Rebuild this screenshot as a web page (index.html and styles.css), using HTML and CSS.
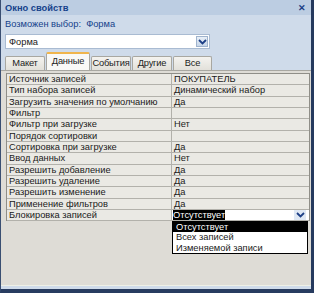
FILE: index.html
```html
<!DOCTYPE html>
<html>
  <head>
    <meta charset="utf-8" />
    <title>Окно свойств</title>
    <link rel="stylesheet" href="styles.css">
  </head>
  <body>
    <div class="window">
      <div class="titlebar">
        <span class="title">Окно свойств</span>
        <span class="close">&#x2715;</span>
      </div>
      <div class="hint">Возможен выбор:&nbsp; Форма</div>
      <div class="combo">
        <span class="combo-text">Форма</span>
        <span class="arrow-btn">
          <svg width="9" height="6" viewBox="0 0 9 6"><path d="M1 1 L4.5 4.5 L8 1" fill="none" stroke="#1d3f86" stroke-width="1.8"/></svg>
        </span>
      </div>
      <div class="tabs">
        <div class="tab">Макет</div>
        <div class="tab active">Данные</div>
        <div class="tab">События</div>
        <div class="tab">Другие</div>
        <div class="tab wide">Все</div>
      </div>
      <div class="panel">
        <div class="grid">
          <div class="row"><div class="name">Источник записей</div><div class="value">ПОКУПАТЕЛЬ</div></div>
          <div class="row"><div class="name">Тип набора записей</div><div class="value">Динамический набор</div></div>
          <div class="row"><div class="name">Загрузить значения по умолчанию</div><div class="value">Да</div></div>
          <div class="row"><div class="name">Фильтр</div><div class="value"></div></div>
          <div class="row"><div class="name">Фильтр при загрузке</div><div class="value">Нет</div></div>
          <div class="row"><div class="name">Порядок сортировки</div><div class="value"></div></div>
          <div class="row"><div class="name">Сортировка при загрузке</div><div class="value">Да</div></div>
          <div class="row"><div class="name">Ввод данных</div><div class="value">Нет</div></div>
          <div class="row"><div class="name">Разрешить добавление</div><div class="value">Да</div></div>
          <div class="row"><div class="name">Разрешить удаление</div><div class="value">Да</div></div>
          <div class="row"><div class="name">Разрешить изменение</div><div class="value">Да</div></div>
          <div class="row"><div class="name">Применение фильтров</div><div class="value">Да</div></div>
          <div class="row last">
            <div class="name">Блокировка записей</div>
            <div class="value editing">
              <span class="selected-text">Отсутствует</span>
              <span class="cell-arrow">
                <svg width="9" height="6" viewBox="0 0 9 6"><path d="M1 1 L4.5 4.5 L8 1" fill="none" stroke="#1d3f86" stroke-width="1.8"/></svg>
              </span>
              <div class="dropdown">
                <div class="option current">Отсутствует</div>
                <div class="option">Всех записей</div>
                <div class="option">Изменяемой записи</div>
              </div>
            </div>
          </div>
        </div>
      </div>
    </div>
  </body>
</html>
```

FILE: styles.css
```css
body {
  margin: 0;
  padding: 0;
  font-family: "Liberation Sans", Arial, sans-serif;
  font-size: 9.3px;
  background: #1b2a4a;
}

.window {
  width: 310px;
  height: 286px;
  margin: 0;
  padding-bottom: 3px;
  border-left: 1px solid #3a4f72;
  border-right: 3px solid #263a5e;
  border-bottom: 4px solid #283c60;
  background: #cfdbea;
  display: flex;
  flex-direction: column;
}

.titlebar {
  height: 15px;
  background: #bccde2;
  display: flex;
  justify-content: space-between;
  align-items: center;
  padding: 0 5px 0 4px;
}

.title {
  font-weight: bold;
  color: #15428b;
}

.close {
  color: #1d3f86;
  font-weight: bold;
  font-size: 9px;
}

.hint {
  color: #15428b;
  padding: 4px 4px 0 4px;
  height: 12px;
}

.combo {
  margin: 3px 0 0 4px;
  width: 203px;
  height: 13px;
  background: #fff;
  border: 1px solid #a9bbd2;
  display: flex;
  justify-content: space-between;
  align-items: center;
}

.combo-text {
  padding-left: 3px;
  color: #222;
}

.arrow-btn,
.cell-arrow {
  width: 12px;
  height: 11px;
  margin-right: 1px;
  background: linear-gradient(#e9f0f8, #c7d6e9);
  border: 1px solid #9fb3cd;
  box-sizing: border-box;
  display: flex;
  justify-content: center;
  align-items: center;
}

.tabs {
  display: flex;
  align-items: flex-end;
  margin: 4px 0 0 4px;
  height: 17px;
}

.tab {
  width: 38px;
  height: 13px;
  background: linear-gradient(#f4f3ef, #e2e0da);
  border: 1px solid #a8a7a1;
  border-bottom: none;
  border-radius: 2px 2px 0 0;
  margin-right: 1px;
  text-align: center;
  line-height: 13px;
  color: #222;
  white-space: nowrap;
  letter-spacing: -0.2px;
}

.tab.wide {
  width: 37px;
}

.tab.active {
  width: 42px;
  height: 16px;
  background: #f9f9f7;
  border-top: 2px solid #f0b54c;
  line-height: 14px;
}

.panel {
  flex: 1;
  background: #dedcd6;
  border-top: 1px solid #a8a7a1;
  border-bottom: 1px solid #eef0e6;
  padding: 2px 1px 0 5px;
}

.grid {
  background: #eae9e4;
  border: 1px solid #8f8e88;
  border-bottom: none;
}

.row {
  display: flex;
  height: 11.33px;
  box-sizing: border-box;
  border-bottom: 1px solid #b2b1ab;
}

.name {
  width: 162px;
  padding-left: 2px;
  border-right: 1px solid #b2b1ab;
  color: #1a1a1a;
  line-height: 10px;
  white-space: nowrap;
}

.value {
  flex: 1;
  padding-left: 2px;
  color: #1a1a1a;
  line-height: 10px;
  white-space: nowrap;
}

.value.editing {
  position: relative;
  display: flex;
  justify-content: space-between;
  background: #fff;
  padding-left: 1px;
}

.selected-text {
  background: #000;
  color: #fff;
  height: 10px;
}

.cell-arrow {
  height: 10px;
  background: #dfe8f4;
  border: none;
  margin-right: 3px;
}

.dropdown {
  position: absolute;
  top: 11px;
  left: 0;
  width: 134px;
  background: #fff;
  border: 1px solid #000;
}

.option {
  height: 10.5px;
  line-height: 10.5px;
  padding-left: 3px;
  color: #1a1a1a;
}

.option.current {
  background: #000;
  color: #fff;
}
```
